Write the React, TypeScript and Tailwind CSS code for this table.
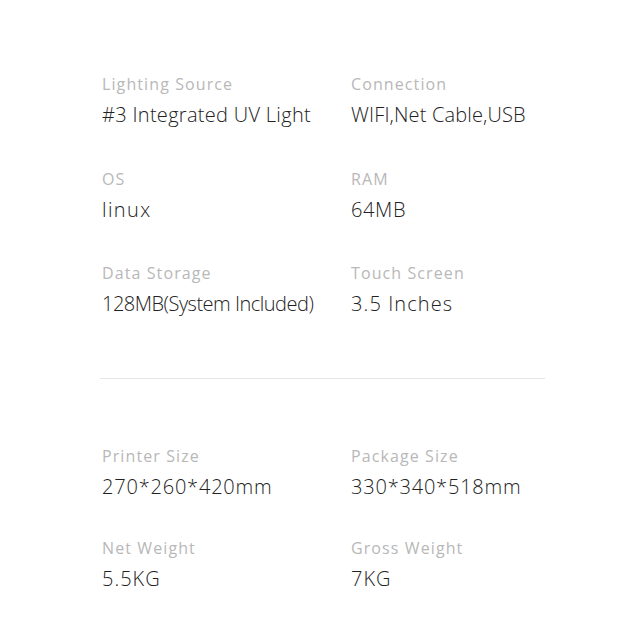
const specs = [
  { label: "Lighting Source", value: "#3 Integrated UV Light", track: "tracking-[0.3px]" },
  { label: "Connection", value: "WIFI,Net Cable,USB", track: "tracking-[0.15px]" },
  { label: "OS", value: "linux", track: "tracking-[1.4px]" },
  { label: "RAM", value: "64MB", track: "tracking-[0.6px]" },
  { label: "Data Storage", value: "128MB(System Included)", track: "tracking-[-0.5px]" },
  { label: "Touch Screen", value: "3.5 Inches", track: "tracking-[1.1px]" },
];

const sizes = [
  { label: "Printer Size", value: "270*260*420mm", track: "tracking-[0.8px]" },
  { label: "Package Size", value: "330*340*518mm", track: "tracking-[0.8px]" },
  { label: "Net Weight", value: "5.5KG", track: "tracking-[1px]" },
  { label: "Gross Weight", value: "7KG", track: "tracking-[1px]" },
];

function SpecItem({ label, value, track }: { label: string; value: string; track: string }) {
  return (
    <div className="flex flex-col">
      <span className="text-[16px] leading-[20px] text-[#b8b8b8] tracking-[1.1px]">{label}</span>
      <span className={`mt-[7px] text-[20px] leading-[28px] font-light text-[#222222] whitespace-nowrap ${track}`}>
        {value}
      </span>
    </div>
  );
}

export default function App() {
  return (
    <div
      className="w-[638px] h-[638px] bg-white pl-[102px] pt-[74px]"
      style={{ fontFamily: "'Open Sans', 'Noto Sans', sans-serif" }}
    >
      <div className="grid grid-cols-[249px_200px] gap-y-[39.5px]">
        {specs.map((s) => (
          <SpecItem key={s.label} {...s} />
        ))}
      </div>
      <div className="mt-[60px] -ml-[2px] w-[445px] h-px bg-[#e6e6e6]" />
      <div className="mt-[67px] grid grid-cols-[249px_200px] gap-y-[37px]">
        {sizes.map((s) => (
          <SpecItem key={s.label} {...s} />
        ))}
      </div>
    </div>
  );
}
